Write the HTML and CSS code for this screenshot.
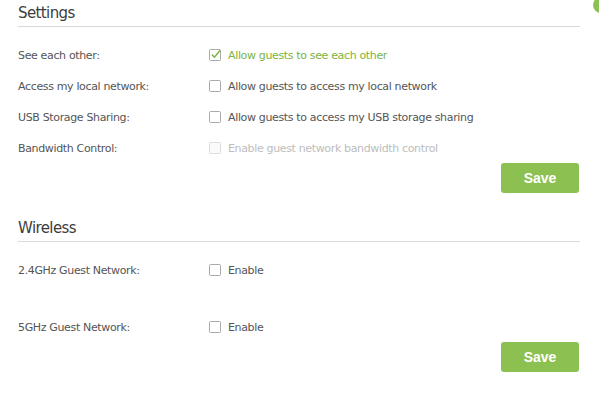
FILE: index.html
```html
<!DOCTYPE html>
<html>
<head>
<meta charset="utf-8">
<link rel="stylesheet" href="styles.css">
</head>
<body>
<div class="page">
  <span class="help-dot"></span>
  <section class="panel">
    <h2 class="title">Settings</h2>
    <div class="rows">
      <div class="row">
        <span class="label">See each other:</span>
        <label class="check is-checked">
          <svg class="box" width="14" height="14" viewBox="0 0 14 14"><rect x="0.5" y="1.5" width="11" height="11" rx="1" fill="#fff" stroke="#a9a9a9"/><path d="M2.8 6.6 L5.4 9.3 L11.2 2.2" fill="none" stroke="#7cb342" stroke-width="1.4"/></svg>
          <span>Allow guests to see each other</span>
        </label>
      </div>
      <div class="row">
        <span class="label">Access my local network:</span>
        <label class="check">
          <svg class="box" width="14" height="14" viewBox="0 0 14 14"><rect x="0.5" y="1.5" width="11" height="11" rx="1" fill="#fff" stroke="#a9a9a9"/></svg>
          <span>Allow guests to access my local network</span>
        </label>
      </div>
      <div class="row">
        <span class="label">USB Storage Sharing:</span>
        <label class="check">
          <svg class="box" width="14" height="14" viewBox="0 0 14 14"><rect x="0.5" y="1.5" width="11" height="11" rx="1" fill="#fff" stroke="#a9a9a9"/></svg>
          <span>Allow guests to access my USB storage sharing</span>
        </label>
      </div>
      <div class="row">
        <span class="label">Bandwidth Control:</span>
        <label class="check is-disabled">
          <svg class="box" width="14" height="14" viewBox="0 0 14 14"><rect x="0.5" y="1.5" width="11" height="11" rx="1" fill="#fafafa" stroke="#dcdcdc"/></svg>
          <span>Enable guest network bandwidth control</span>
        </label>
      </div>
    </div>
    <div class="actions"><button class="save">Save</button></div>
  </section>

  <section class="panel">
    <h2 class="title">Wireless</h2>
    <div class="rows rows-wide">
      <div class="row">
        <span class="label">2.4GHz Guest Network:</span>
        <label class="check">
          <svg class="box" width="14" height="14" viewBox="0 0 14 14"><rect x="0.5" y="1.5" width="11" height="11" rx="1" fill="#fff" stroke="#a9a9a9"/></svg>
          <span>Enable</span>
        </label>
      </div>
      <div class="row">
        <span class="label">5GHz Guest Network:</span>
        <label class="check">
          <svg class="box" width="14" height="14" viewBox="0 0 14 14"><rect x="0.5" y="1.5" width="11" height="11" rx="1" fill="#fff" stroke="#a9a9a9"/></svg>
          <span>Enable</span>
        </label>
      </div>
    </div>
    <div class="actions"><button class="save">Save</button></div>
  </section>
</div>
</body>
</html>
```
FILE: styles.css
```css
* { box-sizing: border-box; }
html, body { margin: 0; padding: 0; background: #fff; }
body {
  font-family: "DejaVu Sans", Verdana, sans-serif;
  font-size: 11px;
  letter-spacing: -0.35px;
  color: #555;
  width: 599px;
  height: 400px;
  overflow: hidden;
}
.page {
  position: relative;
  padding: 3px 19px 0 18px;
}
.help-dot {
  position: absolute;
  left: 593px;
  top: -3px;
  width: 16px;
  height: 16px;
  border-radius: 50%;
  background: #8cc152;
}
.panel { display: flex; flex-direction: column; }
.panel + .panel { margin-top: 25px; }
.title {
  margin: 0;
  font-size: 15px;
  font-weight: normal;
  letter-spacing: -0.6px;
  line-height: 20px;
  color: #3c3c3c;
  padding-bottom: 3px;
  border-bottom: 1px solid #d9d9d9;
}
.rows {
  display: flex;
  flex-direction: column;
  gap: 11px;
  margin-top: 18px;
}
.rows-wide { gap: 37px; }
.row {
  display: flex;
  align-items: center;
  height: 20px;
}
.label { width: 191px; flex: none; }
.check {
  display: flex;
  align-items: center;
  gap: 5px;
}
.box { flex: none; margin-top: -1px; }
.is-checked { color: #7cb342; }
.is-disabled { color: #bdbdbd; }
.actions {
  display: flex;
  justify-content: flex-end;
  margin-top: 5px;
  padding-right: 1px;
}
.save {
  width: 78px;
  height: 30px;
  border: none;
  border-radius: 3px;
  background: #8cc152;
  color: #fff;
  font-family: "Liberation Sans", Arial, sans-serif;
  font-size: 14px;
  font-weight: bold;
  letter-spacing: 0;
  cursor: pointer;
}
```
